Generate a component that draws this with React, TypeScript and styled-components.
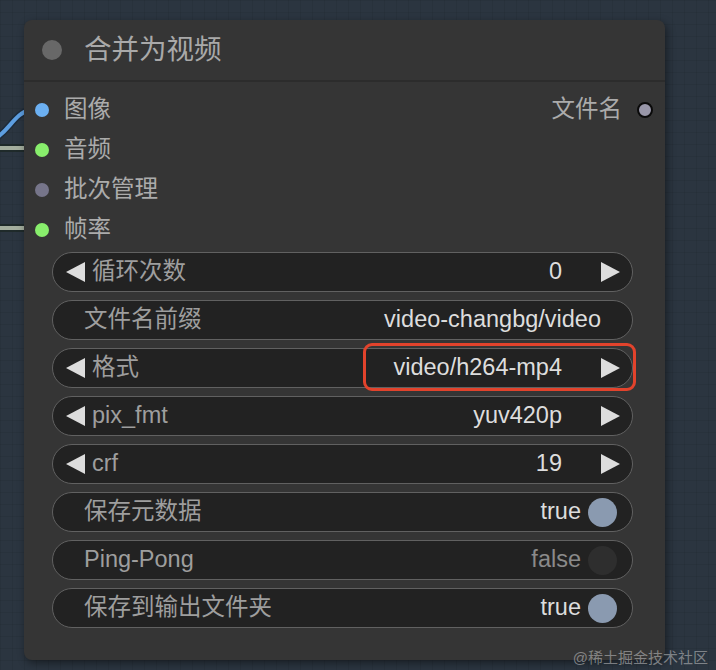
import styled, { createGlobalStyle } from 'styled-components'

const GlobalStyle = createGlobalStyle`
  html, body {
    margin: 0;
    padding: 0;
    background: #2b3540;
  }
  * { box-sizing: border-box; }
`

const FONT = `"Liberation Sans", "Noto Sans CJK SC", sans-serif`

const Canvas = styled.div`
  position: relative;
  width: 716px;
  height: 670px;
  overflow: hidden;
  padding: 20px 0 0 24px;
  background-color: #2b3540;
  background-image:
    linear-gradient(rgba(0, 0, 0, 0.06) 1px, transparent 1px),
    linear-gradient(90deg, rgba(0, 0, 0, 0.06) 1px, transparent 1px);
  background-size: 12px 12px;
  font-family: ${FONT};
`

const Wires = styled.svg`
  position: absolute;
  left: 0;
  top: 0;
`

const Node = styled.div`
  position: relative;
  width: 641px;
  height: 640px;
  background: #353535;
  border-radius: 8px;
  box-shadow: 2px 3px 8px rgba(0, 0, 0, 0.45);
`

const TitleBar = styled.div`
  height: 62px;
  display: flex;
  align-items: center;
  gap: 22px;
  padding-left: 18px;
  border-bottom: 2px solid #2c2c2c;
`

const TitleDot = styled.span`
  width: 20px;
  height: 20px;
  border-radius: 50%;
  background: #686868;
`

const Title = styled.span`
  font-size: 27.5px;
  color: #a9a9a9;
  line-height: 1;
`

const Slots = styled.div`
  padding-top: 8px;
  display: flex;
  flex-direction: column;
`

const SlotRow = styled.div`
  height: 40px;
  display: flex;
  align-items: center;
  justify-content: space-between;
  padding: 0 12px 0 11px;
`

const Slot = styled.div`
  display: flex;
  align-items: center;
  gap: 15px;
`

const SlotDot = styled.span<{ $color: string; $outlined?: boolean }>`
  width: ${p => (p.$outlined ? '16px' : '14px')};
  height: ${p => (p.$outlined ? '16px' : '14px')};
  border-radius: 50%;
  background: ${p => p.$color};
  border: ${p => (p.$outlined ? '2px solid #0a0a0a' : 'none')};
`

const SlotLabel = styled.span`
  font-size: 23.5px;
  color: #ababab;
  line-height: 1;
`

const Widgets = styled.div`
  display: flex;
  flex-direction: column;
  gap: 8px;
  margin: 2px 32px 0 28px;
`

type Kind = 'number' | 'combo' | 'text' | 'toggle'

const Pill = styled.div<{ $kind: Kind }>`
  position: relative;
  height: 40px;
  display: flex;
  align-items: center;
  background: #222;
  border: 1.5px solid #616161;
  border-radius: 20px;
  font-size: 23.5px;
  line-height: 1;
  padding: ${p =>
    p.$kind === 'text'
      ? '0 31px 0 31px'
      : p.$kind === 'toggle'
      ? '0 15px 0 31px'
      : '0 12px 0 13px'};
`

const Label = styled.span<{ $arrow?: boolean }>`
  color: #9e9e9e;
  margin-left: ${p => (p.$arrow ? '7px' : '0')};
  flex: 1;
`

const Value = styled.span<{ $dim?: boolean }>`
  color: ${p => (p.$dim ? '#8a8a8a' : '#dddddd')};
`

const ArrowGap = styled.span`
  width: 39px;
`

const Knob = styled.span<{ $on: boolean }>`
  width: 29px;
  height: 29px;
  margin-left: 7px;
  border-radius: 50%;
  background: ${p => (p.$on ? '#8a9ab0' : '#2e2e2e')};
`

const Highlight = styled.span`
  position: absolute;
  left: 310px;
  right: -4px;
  top: -6px;
  bottom: -4px;
  border: 3px solid #e2432c;
  border-radius: 9px;
  pointer-events: none;
`

const Watermark = styled.div`
  position: absolute;
  right: 8px;
  bottom: 3px;
  font-size: 15px;
  color: rgba(200, 200, 200, 0.55);
  font-family: ${FONT};
`

const Arrow = ({ dir }: { dir: 'left' | 'right' }) => (
  <svg width="19" height="20" viewBox="0 0 19 20">
    <polygon
      points={dir === 'left' ? '19,0 19,20 0,10' : '0,0 0,20 19,10'}
      fill="#dddddd"
    />
  </svg>
)

interface WidgetProps {
  kind: Kind
  label: string
  value: string
  on?: boolean
  highlight?: boolean
}

const Widget = ({ kind, label, value, on, highlight }: WidgetProps) => {
  const arrows = kind === 'number' || kind === 'combo'
  return (
    <Pill $kind={kind}>
      {arrows && <Arrow dir="left" />}
      <Label $arrow={arrows}>{label}</Label>
      <Value $dim={kind === 'toggle' && !on}>{value}</Value>
      {arrows && (
        <>
          <ArrowGap />
          <Arrow dir="right" />
        </>
      )}
      {kind === 'toggle' && <Knob $on={!!on} />}
      {highlight && <Highlight />}
    </Pill>
  )
}

const inputs = [
  { label: '图像', color: '#6cb0f2' },
  { label: '音频', color: '#88ee6c' },
  { label: '批次管理', color: '#76758a' },
  { label: '帧率', color: '#88ee6c' },
]

const widgets: WidgetProps[] = [
  { kind: 'number', label: '循环次数', value: '0' },
  { kind: 'text', label: '文件名前缀', value: 'video-changbg/video' },
  { kind: 'combo', label: '格式', value: 'video/h264-mp4', highlight: true },
  { kind: 'combo', label: 'pix_fmt', value: 'yuv420p' },
  { kind: 'number', label: 'crf', value: '19' },
  { kind: 'toggle', label: '保存元数据', value: 'true', on: true },
  { kind: 'toggle', label: 'Ping-Pong', value: 'false', on: false },
  { kind: 'toggle', label: '保存到输出文件夹', value: 'true', on: true },
]

export default function App() {
  return (
    <>
      <GlobalStyle />
      <Canvas>
        <Wires width="716" height="670">
          <path d="M -10 142 C 8 134, 14 113, 30 110" stroke="#1d2b3a" strokeWidth="7" fill="none" />
          <path d="M -10 142 C 8 134, 14 113, 30 110" stroke="#5d9ee0" strokeWidth="4" fill="none" />
          <path d="M 0 148 L 30 148" stroke="#1f2a2a" strokeWidth="8" />
          <path d="M 0 148 L 30 148" stroke="#a4ae9e" strokeWidth="4" />
          <path d="M 0 228 L 30 228" stroke="#1f2a2a" strokeWidth="8" />
          <path d="M 0 228 L 30 228" stroke="#a4ae9e" strokeWidth="4" />
        </Wires>
        <Node>
          <TitleBar>
            <TitleDot />
            <Title>合并为视频</Title>
          </TitleBar>
          <Slots>
            {inputs.map((s, i) => (
              <SlotRow key={s.label}>
                <Slot>
                  <SlotDot $color={s.color} />
                  <SlotLabel>{s.label}</SlotLabel>
                </Slot>
                {i === 0 && (
                  <Slot>
                    <SlotLabel>文件名</SlotLabel>
                    <SlotDot $color="#9896a8" $outlined />
                  </Slot>
                )}
              </SlotRow>
            ))}
          </Slots>
          <Widgets>
            {widgets.map(w => (
              <Widget key={w.label} {...w} />
            ))}
          </Widgets>
        </Node>
        <Watermark>@稀土掘金技术社区</Watermark>
      </Canvas>
    </>
  )
}
